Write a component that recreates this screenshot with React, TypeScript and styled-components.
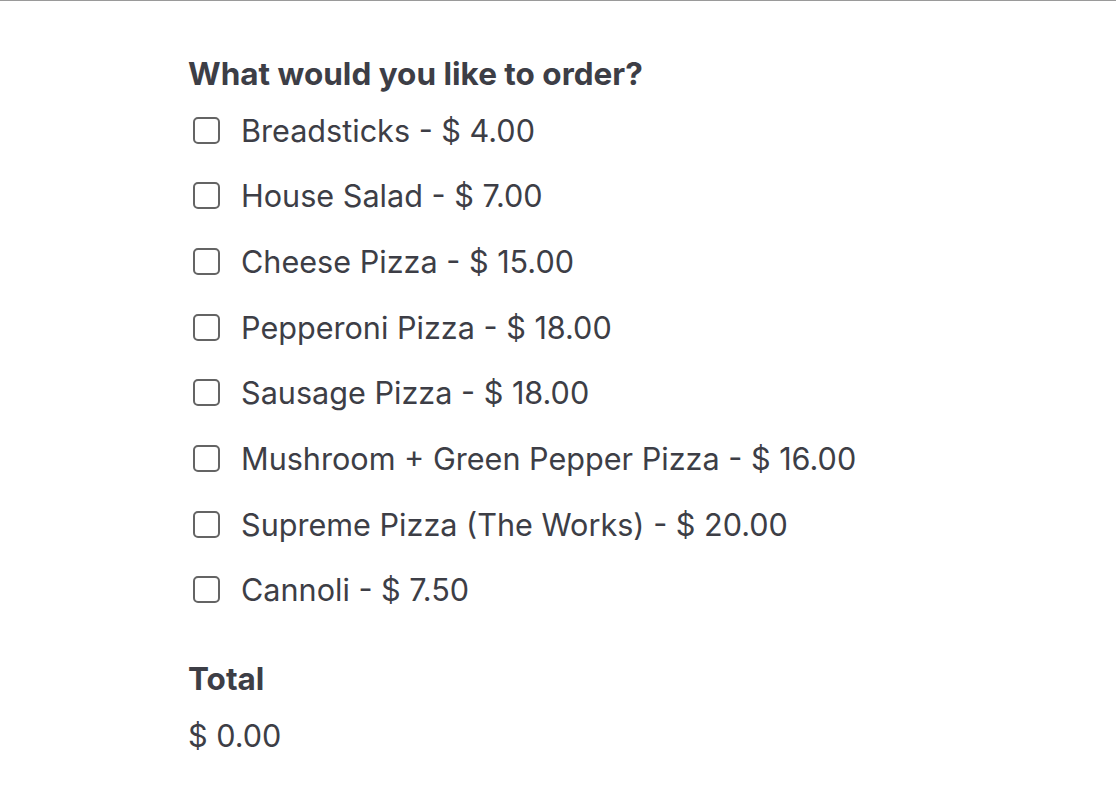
import React from 'react';
import styled, { createGlobalStyle } from 'styled-components';

const GlobalStyle = createGlobalStyle`
	html, body {
		margin: 0;
		padding: 0;
		background: #FFFFFF;
	}
	body {
		font-family: Inter, "Liberation Sans", sans-serif;
		color: #3d3e46;
	}
`

const menuItems = [
	{ name: 'Breadsticks', price: 4 },
	{ name: 'House Salad', price: 7 },
	{ name: 'Cheese Pizza', price: 15 },
	{ name: 'Pepperoni Pizza', price: 18 },
	{ name: 'Sausage Pizza', price: 18 },
	{ name: 'Mushroom + Green Pepper Pizza', price: 16 },
	{ name: 'Supreme Pizza (The Works)', price: 20 },
	{ name: 'Cannoli', price: 7.5 },
];

const App: React.FC = (): JSX.Element => {
	const [checked, setChecked] = React.useState<boolean[]>(menuItems.map(() => false));

	const total = menuItems.reduce((sum, item, i) => (checked[i] ? sum + item.price : sum), 0);

	const toggle = (index: number) => {
		setChecked(prev => prev.map((value, i) => (i === index ? !value : value)));
	};

	return (
		<>
			<GlobalStyle />
			<PageContainer>
				<OrderForm>
					<FieldLabel>What would you like to order?</FieldLabel>
					<ItemList>
						{menuItems.map((item, i) => (
							<ItemRow key={item.name}>
								<CheckBox
									type="checkbox"
									checked={checked[i]}
									onChange={() => toggle(i)}
								/>
								{item.name} - $ {item.price.toFixed(2)}
							</ItemRow>
						))}
					</ItemList>
					<TotalBlock>
						<FieldLabel>Total</FieldLabel>
						<TotalValue>$ {total.toFixed(2)}</TotalValue>
					</TotalBlock>
				</OrderForm>
			</PageContainer>
		</>
	);
}

const PageContainer = styled.div`
	width: 1116px;
	height: 792px;
	box-sizing: border-box;
	border-top: 1px solid #9a9a9a;
	background-color: #FFFFFF;
`

const OrderForm = styled.div`
	display: flex;
	flex-direction: column;
	padding: 55px 0 0 188px;
`

const FieldLabel = styled.div`
	font-size: 31.5px;
	font-weight: 700;
	line-height: 36px;
	color: #3d3e46;
`

const ItemList = styled.div`
	display: flex;
	flex-direction: column;
	gap: 29.7px;
	margin-top: 20px;
`

const ItemRow = styled.label`
	display: flex;
	align-items: center;
	gap: 21px;
	height: 36px;
	padding-left: 5px;
	font-size: 30.6px;
	font-weight: 400;
	color: #3d3e46;
	cursor: pointer;
`

const CheckBox = styled.input`
	appearance: none;
	margin: 0;
	width: 27px;
	height: 27px;
	box-sizing: border-box;
	border: 2px solid #646464;
	border-radius: 5px;
	background: #FFFFFF;
	flex-shrink: 0;

	&:checked {
		background: #3d3e46;
		border-color: #3d3e46;
	}
`

const TotalBlock = styled.div`
	display: flex;
	flex-direction: column;
	gap: 21px;
	margin-top: 53px;
`

const TotalValue = styled.div`
	font-size: 30.6px;
	line-height: 36px;
	color: #3d3e46;
`

export default App;
